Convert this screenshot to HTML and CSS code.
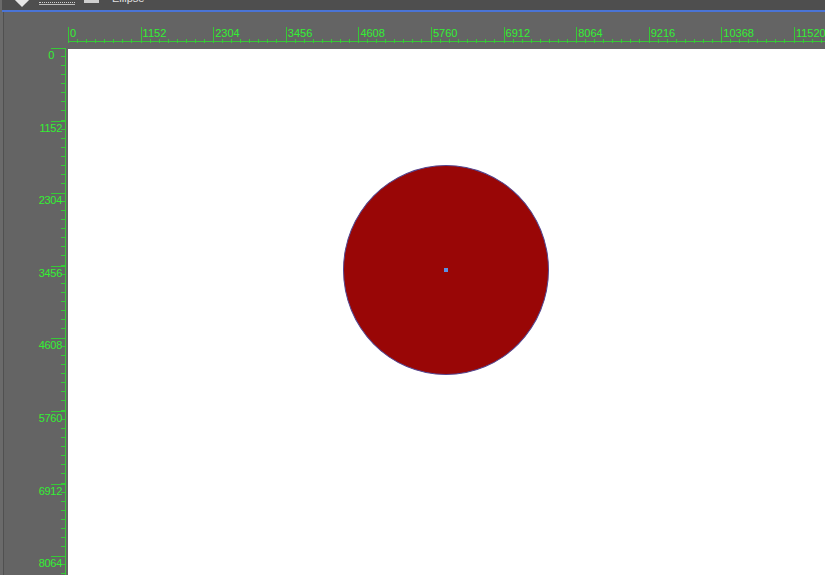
FILE: index.html
```html
<!DOCTYPE html>
<html lang="en">
<head>
    <meta charset="UTF-8">
    <title>Canvas</title>
    <link rel="stylesheet" href="styles.css">
</head>
<body>
<header class="toolbar">
    <span class="tool-diamond"></span>
    <span class="tool-dots"></span>
    <span class="tool-rect"></span>
    <span class="tool-label">Ellipse</span>
</header>
<div class="workspace">
    <div class="corner"></div>
    <div class="ruler-h">
        <div class="seg-h">0</div>
        <div class="seg-h">1152</div>
        <div class="seg-h">2304</div>
        <div class="seg-h">3456</div>
        <div class="seg-h">4608</div>
        <div class="seg-h">5760</div>
        <div class="seg-h">6912</div>
        <div class="seg-h">8064</div>
        <div class="seg-h">9216</div>
        <div class="seg-h">10368</div>
        <div class="seg-h">11520</div>
    </div>
    <div class="ruler-v">
        <div class="seg-v first">0</div>
        <div class="seg-v">1152</div>
        <div class="seg-v">2304</div>
        <div class="seg-v">3456</div>
        <div class="seg-v">4608</div>
        <div class="seg-v">5760</div>
        <div class="seg-v">6912</div>
        <div class="seg-v">8064</div>
    </div>
    <main class="canvas">
        <div class="ellipse">
            <span class="handle"></span>
        </div>
    </main>
</div>
</body>
</html>
```

FILE: styles.css
```css
body {
    margin: 0;
    width: 825px;
    height: 575px;
    overflow: hidden;
    background-color: #6a6a6a;
    font-family: "Liberation Sans", Arial, sans-serif;
}

.toolbar {
    height: 10px;
    background-color: #4e4e4e;
    border-bottom: 2px solid #4a74d6;
    margin-left: 2px;
    display: flex;
    align-items: flex-end;
    overflow: hidden;
}

.tool-diamond {
    width: 10px;
    height: 10px;
    background-color: #e6e6e6;
    transform: rotate(45deg);
    margin: 0 0 5px 15px;
}

.tool-dots {
    width: 36px;
    height: 1px;
    border-top: 1px dotted #d0d0d0;
    border-bottom: 1px solid #bdbdbd;
    margin: 0 0 5px 12px;
}

.tool-rect {
    width: 15px;
    height: 10px;
    background-color: #cfcfcf;
    margin: 0 0 7px 9px;
}

.tool-label {
    color: #e0e0e0;
    font-size: 11px;
    line-height: 11px;
    margin: 0 0 6px 13px;
}

.workspace {
    display: grid;
    grid-template-columns: 63px 1fr;
    grid-template-rows: 36px 1fr;
    height: 563px;
    margin-left: 3px;
    border-left: 1px solid #505050;
    background-color: #646464;
}

/* horizontal ruler */
.ruler-h {
    display: flex;
    align-items: flex-start;
    padding: 15px 0 0 1px;
    overflow: hidden;
}

.seg-h {
    flex: 0 0 72.6px;
    height: 16px;
    box-sizing: border-box;
    border-left: 1px solid #36c936;
    padding-left: 1px;
    color: #33f033;
    font-size: 11px;
    line-height: 12px;
    background:
        linear-gradient(#36c936, #36c936) left 0 bottom 1px / 100% 1px no-repeat,
        repeating-linear-gradient(90deg, transparent 0 8.07px, #36c936 8.07px 9.07px) left 0 bottom 0 / 100% 4px no-repeat;
}

/* vertical ruler */
.ruler-v {
    display: flex;
    flex-direction: column;
    align-items: flex-end;
    padding-right: 1px;
    overflow: hidden;
}

.seg-v {
    flex: 0 0 72.6px;
    width: 30px;
    box-sizing: border-box;
    border-right: 1px solid #36c936;
    padding: 2px 3px 0 0;
    text-align: right;
    color: #33f033;
    font-size: 11px;
    line-height: 11px;
    letter-spacing: -0.3px;
    background:
        linear-gradient(#36c936, #36c936) right 0 top 0 / 14px 1px no-repeat,
        repeating-linear-gradient(180deg, transparent 0 8.07px, #36c936 8.07px 9.07px) right 0 top 0 / 4px 100% no-repeat;
}

.seg-v.first {
    padding-right: 11px;
}

/* drawing area */
.canvas {
    position: relative;
    margin: 1px 0 0 1px;
    background-color: #ffffff;
}

.ellipse {
    position: absolute;
    left: 275px;
    top: 116px;
    width: 204px;
    height: 208px;
    border: 1px solid #54468f;
    border-radius: 50%;
    background-color: #990606;
}

.handle {
    position: absolute;
    left: 100px;
    top: 102px;
    width: 4px;
    height: 4px;
    background-color: #5b8fe3;
}
```
